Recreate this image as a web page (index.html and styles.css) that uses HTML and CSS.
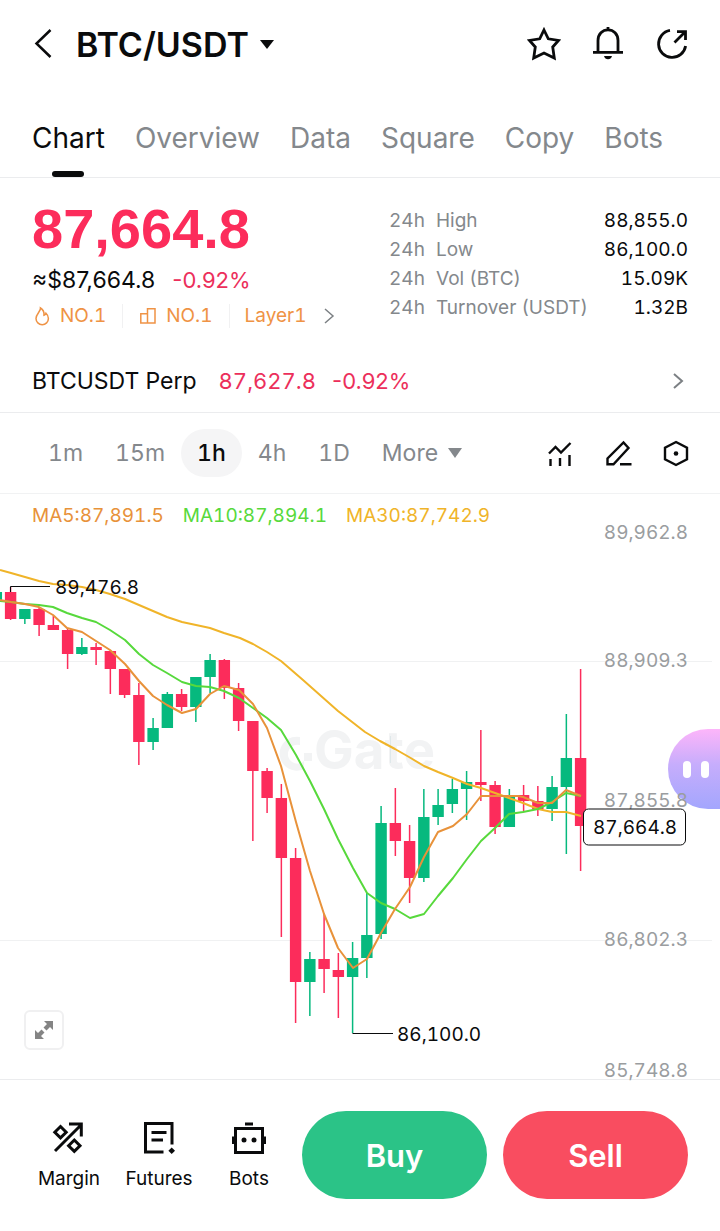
FILE: index.html
```html
<!DOCTYPE html>
<html lang="en">
<head>
	<meta charset="UTF-8">
	<meta name="viewport" content="width=device-width, initial-scale=1">
	<title>BTC/USDT</title>
	<link rel="stylesheet" href="styles.css">
</head>
<body>
	<header class="header">
		<button class="icon_btn back" aria-label="Back">
			<svg width="20" height="32" viewBox="0 0 20 32"><path d="M18.500 2L4.500 15.500L18.500 29" stroke-width="2.500"/></svg>
		</button>
		<button class="pair">
			<span>BTC/USDT</span>
			<svg class="solid" width="14" height="9" viewBox="0 0 14 9"><path d="M0 0H14L7 9Z"/></svg>
		</button>
		<div class="header_tools">
			<button class="icon_btn" aria-label="Favorite">
				<svg width="36" height="36" viewBox="0 0 36 36"><path d="M18 4L22.300 12.800L32.500 14.400L26.700 21L28.300 32L18 27L7.700 32L9.300 21L3.500 14.400L13.700 12.800Z" stroke-width="2.800"/></svg>
			</button>
			<button class="icon_btn" aria-label="Alerts">
				<svg width="36" height="36" viewBox="0 0 36 36"><path d="M8 26V14.500C8 8 12.500 3.800 18 3.800S28 8 28 14.500V26M3 26.300H33M18 1V4" stroke-width="2.800"/><path class="fill" d="M14 30H22Q21 33.300 18 33.300T14 30Z"/></svg>
			</button>
			<button class="icon_btn" aria-label="Share">
				<svg width="36" height="36" viewBox="0 0 36 36"><path d="M16 4.400A13.600 13.600 0 1 0 31.600 20M20.500 16.500L31 6M23 5.600H31.500V14" stroke-width="2.800"/></svg>
			</button>
		</div>
	</header>

	<nav class="tabs">
		<a class="tab active" href="#">Chart</a>
		<a class="tab" href="#">Overview</a>
		<a class="tab" href="#">Data</a>
		<a class="tab" href="#">Square</a>
		<a class="tab" href="#">Copy</a>
		<a class="tab" href="#">Bots</a>
	</nav>

	<section class="summary">
		<div class="quote">
			<div class="price">87,664.8</div>
			<div class="sub_price"><span>≈$87,664.8</span><span class="down pct">-0.92%</span></div>
			<div class="tags">
				<a class="tag" href="#">
					<svg width="20" height="20" viewBox="0 0 20 20"><path d="M8.500 2C9 5 4 8 4 12.500A6.200 6.200 0 0 0 16.400 12.500C16.400 10 15.200 8.300 14 7.200C13.700 8.500 13 9 12 9.300C12.300 6 11 3.500 8.500 2Z"/></svg>
					NO.1
				</a>
				<a class="tag" href="#">
					<svg width="20" height="20" viewBox="0 0 20 20"><path d="M9.500 17V2.800H17V17H2.800V7.800H9.500"/></svg>
					NO.1
				</a>
				<a class="tag" href="#">
					Layer1
					<svg class="arrow" width="12" height="18" viewBox="0 0 12 18"><path d="M2 2L10 9L2 16"/></svg>
				</a>
			</div>
		</div>
		<table class="stats">
			<tr><th>24h</th><th>High</th><td>88,855.0</td></tr>
			<tr><th>24h</th><th>Low</th><td>86,100.0</td></tr>
			<tr><th>24h</th><th>Vol (BTC)</th><td>15.09K</td></tr>
			<tr><th>24h</th><th>Turnover (USDT)</th><td>1.32B</td></tr>
		</table>
	</section>

	<a class="perp" href="#">
		<span>BTCUSDT Perp</span>
		<span class="down">87,627.8</span>
		<span class="down pct">-0.92%</span>
		<svg class="arrow" width="12" height="18" viewBox="0 0 12 18"><path d="M2 2L10 9L2 16"/></svg>
	</a>

	<section class="intervals">
		<button class="interval">1m</button>
		<button class="interval">15m</button>
		<button class="interval active">1h</button>
		<button class="interval">4h</button>
		<button class="interval">1D</button>
		<button class="interval">More <svg class="solid" width="14" height="10" viewBox="0 0 14 10"><path d="M0 0H14L7 10Z"/></svg></button>
		<div class="chart_tools">
			<button class="icon_btn" aria-label="Indicators">
				<svg width="28" height="28" viewBox="0 0 28 28"><path d="M3 14.500L9.500 8L15 13.500L24.500 4M4.500 20V27M14 19V27M23.500 16V27" stroke-width="2.400"/></svg>
			</button>
			<button class="icon_btn" aria-label="Draw">
				<svg width="28" height="28" viewBox="0 0 28 28"><path d="M3.500 25.300V19.500L19.500 3.500L24.500 9L9.500 25.300ZM16 25.300H27.500" stroke-width="2.400"/></svg>
			</button>
			<button class="icon_btn" aria-label="Settings">
				<svg width="28" height="28" viewBox="0 0 28 28"><path d="M14 3L25 8.800V20.200L14 26L3 20.200V8.800Z" stroke-width="2.400"/><circle class="fill" cx="14" cy="14.500" r="2.300"/></svg>
			</button>
		</div>
	</section>

	<section class="chart">
		<div class="legend">
			<span class="ma5">MA5:87,891.5</span>
			<span class="ma10">MA10:87,894.1</span>
			<span class="ma30">MA30:87,742.9</span>
		</div>
		<button class="helper" aria-label="Assistant"><i></i><i></i></button>
		<svg class="kline" viewBox="0 494 720 585">
			<g class="grid">
				<path d="M0 661.500H712M0 940.500H712"/>
			</g>
			<g class="watermark">
				<path d="M300 737A17 17 0 1 0 304 769V761A9.500 9.500 0 1 1 300 745ZM304 753H312V761H304Z"/>
				<text x="314" y="769">Gate</text>
				<path class="tick" d="M390.500 736V763"/>
			</g>
			<g class="scale">
				<text x="688" y="539">89,962.8</text>
				<text x="688" y="667">88,909.3</text>
				<text x="688" y="807">87,855.8</text>
				<text x="688" y="946">86,802.3</text>
				<text x="688" y="1077">85,748.8</text>
			</g>
			<g id="candles"></g>
			<g id="lines"></g>
			<g class="marks">
				<path d="M10.500 592V586.500H50M352.500 1033.500H393"/>
				<text x="55" y="594">89,476.8</text>
				<text x="397" y="1041">86,100.0</text>
			</g>
			<g class="last">
				<rect x="583.500" y="809" width="102" height="36" rx="5"/>
				<text x="593" y="834">87,664.8</text>
			</g>
		</svg>
		<button class="expand" aria-label="Full screen">
			<svg width="20" height="20" viewBox="0 0 20 20"><path d="M10 1H19V10L16 7L12.500 10.500L9.500 7.500L13 4ZM10 19H1V10L4 13L7.500 9.500L10.500 12.500L7 16Z"/></svg>
		</button>
	</section>

	<footer class="footer">
		<nav class="links">
			<a href="#">
				<svg width="36" height="36" viewBox="0 0 36 36"><path d="M4 32L29.500 6.500M18 5H30.300V17.500M9.500 7.500L15.200 13.200L9.500 18.900L3.800 13.200ZM23.300 21L29 26.700L23.300 32.400L17.600 26.700Z"/></svg>
				Margin
			</a>
			<a href="#">
				<svg width="36" height="36" viewBox="0 0 36 36"><path d="M22.500 33H4.500V4.500H31V25.500M10.500 13.500H25.500M10.500 21H22"/><path class="fill" d="M30.700 28.500L34 31.800L30.700 35.100L27.400 31.800Z"/></svg>
				Futures
			</a>
			<a href="#">
				<svg width="36" height="36" viewBox="0 0 36 36"><path d="M4.500 9.500H31.500V33.500H4.500ZM14 5H22M2.500 17.500V25M33.500 17.500V25"/><circle class="fill" cx="13" cy="21" r="2.500"/><circle class="fill" cx="23" cy="21" r="2.500"/></svg>
				Bots
			</a>
		</nav>
		<button class="trade buy">Buy</button>
		<button class="trade sell">Sell</button>
	</footer>
	<script src="chart.js"></script>
</body>
</html>
```
FILE: styles.css
```css
*{margin:0;padding:0;box-sizing:border-box}
body{
	background: #fff;
	color: #0a0b0c;
	font-family: Inter, "Liberation Sans", sans-serif;
	font-size: 19px;
	font-variant-numeric: tabular-nums;
}
a{color: inherit;text-decoration: none}
button{
	border: 0;
	background: none;
	color: inherit;
	font: inherit;
	font-variant-numeric: tabular-nums;
	cursor: pointer;
}
svg{
	display: block;
	fill: none;
	stroke: currentColor;
}
svg.solid, .fill{fill: currentColor;stroke: none}
.down{color: #ec2f5b}

.header{
	display: flex;
	align-items: center;
	height: 88px;
	padding: 0 30px 0 32px;
}
.icon_btn{flex: none}
.pair{
	display: flex;
	align-items: center;
	gap: 11px;
	margin-left: 24px;
	font-size: 34px;
	font-weight: 600;
}
.header_tools{
	display: flex;
	gap: 28px;
	margin-left: auto;
}

.tabs{
	display: flex;
	gap: 30px;
	padding: 32px 32px 0;
	border-bottom: 1px solid #ebecee;
	color: #84888c;
	font-size: 28px;
	line-height: 36px;
}
.tab{
	position: relative;
	padding-bottom: 21px;
}
.tab.active{color: #0a0b0c}
.tab.active::after{
	content: "";
	position: absolute;
	left: 50%;
	bottom: 0;
	width: 32px;
	height: 6px;
	margin-left: -16px;
	border-radius: 3px;
	background: #0a0b0c;
}

.summary{
	display: flex;
	justify-content: space-between;
	padding: 20px 32px 18px;
}
.price{
	color: #fc2c5b;
	font: bold 56px/62px "Liberation Sans", sans-serif;
}
.sub_price{
	display: flex;
	gap: 17px;
	font-size: 23px;
	font-variant-numeric: normal;
	line-height: 40px;
}
.tags{
	display: flex;
	color: #ef9345;
	line-height: 32px;
}
.tag{
	display: flex;
	align-items: center;
	gap: 8px;
}
.tag svg{stroke-width: 1.5}
.tag + .tag{
	margin-left: 16px;
	padding-left: 16px;
	background: linear-gradient(#f1f1f2, #f1f1f2) 0 50% / 1px 24px no-repeat;
}
.arrow{color: #7c8084;stroke-width: 2}
.tag .arrow{margin-left: 8px}
.stats{
	width: 299px;
	margin-top: 8px;
	align-self: flex-start;
	border-collapse: collapse;
	line-height: 29px;
	white-space: nowrap;
}
.stats th{
	color: #84888c;
	font-weight: 400;
	text-align: left;
}
.stats th:first-child{width: 47px}
.stats td{text-align: right}

.perp{
	display: flex;
	align-items: center;
	padding: 0 36px 0 32px;
	height: 63px;
	border-bottom: 1px solid #ebecee;
	font-size: 23px;
}
.perp .down{
	margin-left: 22px;
	font-size: 22px;
}
.perp .pct{margin-left: 16px}
.down.pct{
	font-size: 22px;
	font-variant-numeric: normal;
}
.perp .arrow{margin-left: auto}

.intervals{
	display: flex;
	align-items: center;
	height: 81px;
	padding: 0 30px 0 32px;
	border-bottom: 1px solid #f1f2f3;
	color: #84888c;
	font-size: 23px;
}
.interval{
	display: flex;
	align-items: center;
	gap: 10px;
	height: 48px;
	padding: 0 16px;
	border-radius: 24px;
}
.interval.active{
	background: #f5f5f6;
	color: #0a0b0c;
	font-weight: 500;
}
.chart_tools{
	display: flex;
	gap: 30px;
	margin-left: auto;
	color: #0a0b0c;
}

.chart{
	position: relative;
	border-bottom: 1px solid #ebecee;
}
.legend{
	position: absolute;
	top: 10px;
	left: 32px;
	display: flex;
	gap: 19px;
	line-height: 24px;
}
.ma5{color: #e8923a;stroke: #e8923a}
.ma10{color: #57d93c;stroke: #57d93c}
.ma30{color: #f0b429;stroke: #f0b429}
.kline{
	position: relative;
	width: 100%;
	overflow: visible;
	pointer-events: none;
}
.kline text{
	fill: #0a0b0c;
	stroke: none;
	font-size: 19px;
}
.kline .scale text{
	fill: #9a9da0;
	text-anchor: end;
}
.grid{stroke: #f0f1f2}
.watermark{fill: #f2f3f4;stroke: none}
.kline .watermark text{
	fill: #f2f3f4;
	font-size: 53px;
	font-weight: 700;
}
.watermark .tick{stroke: #dfe8ea}
.up{fill: #06b97e;stroke: #06b97e}
.fall{fill: #fc2c5b;stroke: #fc2c5b}
.up rect, .fall rect{stroke: none}
.up path, .fall path{stroke-width: 1.5}
#lines{stroke-width: 2;stroke-linejoin: round}
.last rect{fill: #fff}
.expand{
	position: absolute;
	left: 24px;
	bottom: 29px;
	display: flex;
	align-items: center;
	justify-content: center;
	width: 40px;
	height: 40px;
	border: 2px solid #f0f0f1;
	border-radius: 6px;
	background: #fff;
	color: #848484;
}
.expand svg{fill: currentColor;stroke: none}
.helper{
	position: absolute;
	right: 0;
	top: 235px;
	display: flex;
	align-items: center;
	gap: 10px;
	width: 52px;
	height: 80px;
	padding-left: 15px;
	border-radius: 40px 0 0 40px;
	background: linear-gradient(#fdb5fa, #c6adfc 45%, #a3a6fd);
}
.helper i{
	width: 8px;
	height: 17px;
	border-radius: 4px;
	background: #fff;
}

.footer{
	display: flex;
	align-items: center;
	gap: 16px;
	padding: 31px 32px 32px 24px;
}
.links{
	display: flex;
	flex: none;
	width: 270px;
	margin-right: -8px;
}
.links a{
	display: flex;
	flex: 1;
	flex-direction: column;
	align-items: center;
	gap: 12px;
	line-height: 24px;
}
.links svg{stroke-width: 3}
.trade{
	flex: 1;
	height: 88px;
	border-radius: 44px;
	color: #fff;
	font-size: 31px;
	font-weight: 600;
}
.buy{background: #2bc387}
.sell{background: #f94d60}
```
FILE: chart.js
```js
(function(){
	var NS = 'http://www.w3.org/2000/svg';
	var step = 14.25; // distance between candles
	var first = 10.6; // center of candle 0
	// direction, high, body top, body bottom, low
	var candles = [
		['up',590,592,601,601],
		['fall',587,592,619,620],
		['up',609,609,619,624],
		['fall',607,609,625,636],
		['fall',616,625,630,630],
		['fall',628,630,654,669],
		['up',638,647,654,655],
		['fall',643,647,650,665],
		['fall',651,651,669,694],
		['fall',669,669,695,698],
		['fall',683,695,742,765],
		['up',718,728,742,750],
		['up',692,694,728,728],
		['fall',689,694,707,711],
		['up',677,677,707,722],
		['up',654,660,677,693],
		['fall',659,660,688,699],
		['fall',683,688,721,731],
		['fall',721,721,771,841],
		['fall',768,771,798,813],
		['fall',784,798,858,937],
		['fall',848,858,982,1023],
		['up',952,959,982,1016],
		['fall',914,959,969,993],
		['fall',953,970,977,1018],
		['up',942,958,977,1033],
		['up',893,935,958,978],
		['up',806,823,934,939],
		['fall',788,823,841,856],
		['fall',825,841,878,903],
		['up',789,817,878,882],
		['up',789,805,817,825],
		['up',779,789,804,813],
		['up',771,782,789,820],
		['fall',730,782,785,801],
		['fall',781,785,827,834],
		['up',789,795,827,827],
		['fall',785,795,801,812],
		['fall',786,801,809,816],
		['up',776,787,809,821],
		['up',714,758,787,854],
		['fall',669,758,826,871]
	];
	var lines = {
		ma30: '0,570 11,573 25,577 39,581 53,584 67,585 82,587 96,590 110,594 125,599 153,611 167,617 182,622 210,628 224,633 240,638 253,644 267,652 281,661 303,680 338,711 365,732 380,741 395,749 409,757 424,766 438,772 453,778 467,784 481,788 495,793 509,798 523,803 538,809 552,812 566,812 581,816',
		ma10: '0,601 11,602 25,604 39,605 53,607 67,613 82,618 96,622 110,630 125,640 139,654 153,665 167,673 182,682 196,686 210,687 224,691 239,698 253,708 267,718 281,730 296,755 310,781 324,809 338,839 353,868 367,893 381,903 395,909 410,918 424,914 438,896 453,878 467,859 481,841 495,828 509,814 523,812 538,809 552,802 566,793 581,796',
		ma5: '0,600 11,602 25,604 39,607 53,615 67,628 82,632 96,641 110,650 125,664 139,681 153,696 167,705 182,713 196,709 210,694 224,686 239,690 253,704 267,728 281,766 296,822 310,871 324,914 338,948 353,968 367,959 381,933 395,909 410,887 424,857 438,832 453,826 467,814 481,796 518,796 523,797 538,803 552,803 566,790 581,796'
	};

	function add(parent, tag, attrs){
		var el = document.createElementNS(NS, tag);
		for (var key in attrs) {
			el.setAttribute(key, attrs[key]);
		}
		parent.appendChild(el);
		return el;
	}

	var box = document.querySelector('#candles');
	candles.forEach(function(c, i){
		var x = first + (i - 1) * step; // the first one is cut by the left edge
		var g = add(box, 'g', {'class': c[0]});
		add(g, 'path', {d: 'M' + x + ' ' + c[1] + 'V' + c[4]});
		add(g, 'rect', {x: x - 5.7, y: c[2], width: 11.4, height: c[3] - c[2]});
	});

	var lineBox = document.querySelector('#lines');
	for (var name in lines) {
		add(lineBox, 'polyline', {'class': name, points: lines[name]});
	}
})()
```
